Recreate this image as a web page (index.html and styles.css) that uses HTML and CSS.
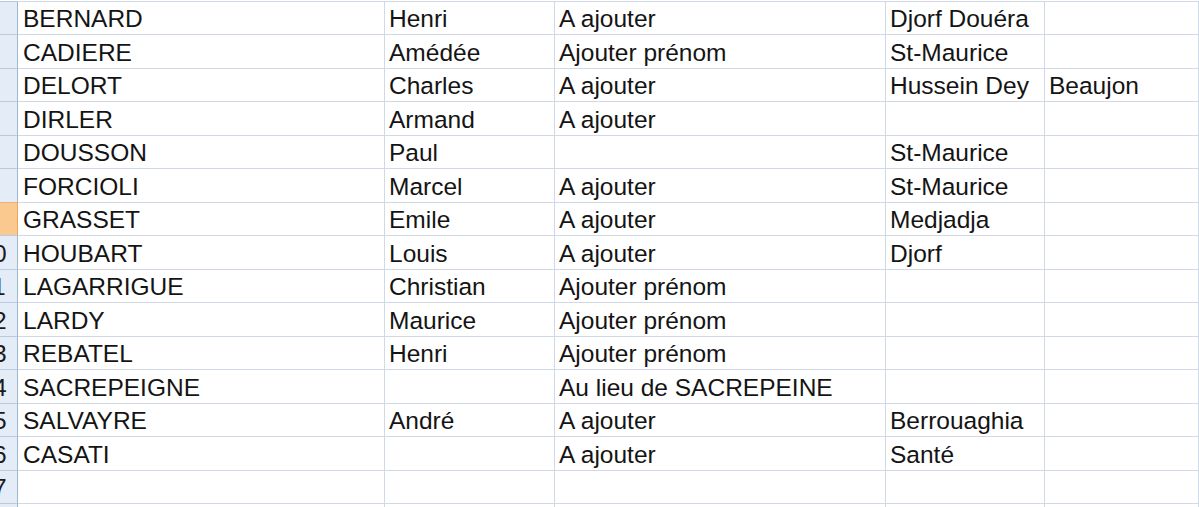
FILE: index.html
```html
<!DOCTYPE html>
<html lang="fr">
<head>
<meta charset="utf-8">
<title>Feuille</title>
<link rel="stylesheet" href="styles.css">
</head>
<body>
<div class="sheet">
  <div class="rh"><span>3</span></div><div class="c ca">BERNARD</div><div class="c">Henri</div><div class="c">A ajouter</div><div class="c">Djorf Douéra</div><div class="c"></div>
  <div class="rh"><span>4</span></div><div class="c ca">CADIERE</div><div class="c">Amédée</div><div class="c">Ajouter prénom</div><div class="c">St-Maurice</div><div class="c"></div>
  <div class="rh"><span>5</span></div><div class="c ca">DELORT</div><div class="c">Charles</div><div class="c">A ajouter</div><div class="c">Hussein Dey</div><div class="c">Beaujon</div>
  <div class="rh"><span>6</span></div><div class="c ca">DIRLER</div><div class="c">Armand</div><div class="c">A ajouter</div><div class="c"></div><div class="c"></div>
  <div class="rh"><span>7</span></div><div class="c ca">DOUSSON</div><div class="c">Paul</div><div class="c"></div><div class="c">St-Maurice</div><div class="c"></div>
  <div class="rh"><span>8</span></div><div class="c ca">FORCIOLI</div><div class="c">Marcel</div><div class="c">A ajouter</div><div class="c">St-Maurice</div><div class="c"></div>
  <div class="rh sel"><span>9</span></div><div class="c ca">GRASSET</div><div class="c">Emile</div><div class="c">A ajouter</div><div class="c">Medjadja</div><div class="c"></div>
  <div class="rh"><span>10</span></div><div class="c ca">HOUBART</div><div class="c">Louis</div><div class="c">A ajouter</div><div class="c">Djorf</div><div class="c"></div>
  <div class="rh"><span>11</span></div><div class="c ca">LAGARRIGUE</div><div class="c">Christian</div><div class="c">Ajouter prénom</div><div class="c"></div><div class="c"></div>
  <div class="rh"><span>12</span></div><div class="c ca">LARDY</div><div class="c">Maurice</div><div class="c">Ajouter prénom</div><div class="c"></div><div class="c"></div>
  <div class="rh"><span>13</span></div><div class="c ca">REBATEL</div><div class="c">Henri</div><div class="c">Ajouter prénom</div><div class="c"></div><div class="c"></div>
  <div class="rh"><span>14</span></div><div class="c ca">SACREPEIGNE</div><div class="c"></div><div class="c">Au lieu de SACREPEINE</div><div class="c"></div><div class="c"></div>
  <div class="rh"><span>15</span></div><div class="c ca">SALVAYRE</div><div class="c">André</div><div class="c">A ajouter</div><div class="c">Berrouaghia</div><div class="c"></div>
  <div class="rh"><span>16</span></div><div class="c ca">CASATI</div><div class="c"></div><div class="c">A ajouter</div><div class="c">Santé</div><div class="c"></div>
  <div class="rh"><span>17</span></div><div class="c ca"></div><div class="c"></div><div class="c"></div><div class="c"></div><div class="c"></div>
  <div class="rh rh-partial"></div><div class="c ca"></div><div class="c"></div><div class="c"></div><div class="c"></div><div class="c"></div>
</div>
</body>
</html>
```
FILE: styles.css
```css
html, body {
  margin: 0;
  padding: 0;
  background: #ffffff;
  overflow: hidden;
}

body {
  width: 1199px;
  height: 507px;
  font-family: "Liberation Sans", Arial, sans-serif;
  font-size: 24.5px;
  color: #141414;
}

.sheet {
  display: grid;
  grid-template-columns: 18px 367px 170px 331px 159px 1fr;
  grid-template-rows: repeat(15, 33.47px) 10px;
  padding-top: 1px;
}

.c {
  box-sizing: border-box;
  border-top: 1px solid #d2d9e6;
  border-right: 1px solid #d2d9e6;
  display: flex;
  align-items: flex-end;
  padding: 0 0 2px 4px;
  line-height: 27px;
  white-space: nowrap;
  overflow: hidden;
  min-height: 0;
}

.ca {
  padding-left: 5px;
}

.rh {
  box-sizing: border-box;
  background: #e4ecf7;
  border-top: 1px solid #b9cadd;
  border-right: 1px solid #9eb6ce;
  display: flex;
  justify-content: flex-end;
  align-items: flex-end;
  padding: 0 10px 2px 0;
  line-height: 27px;
  overflow: hidden;
  color: #1a1a1a;
  min-height: 0;
}

.rh span {
  flex: none;
  width: 28px;
  text-align: center;
  white-space: nowrap;
}

.rh.sel {
  background: #f9c98f;
  border-top-color: #f0b070;
  border-right-color: #eea55e;
}
```
